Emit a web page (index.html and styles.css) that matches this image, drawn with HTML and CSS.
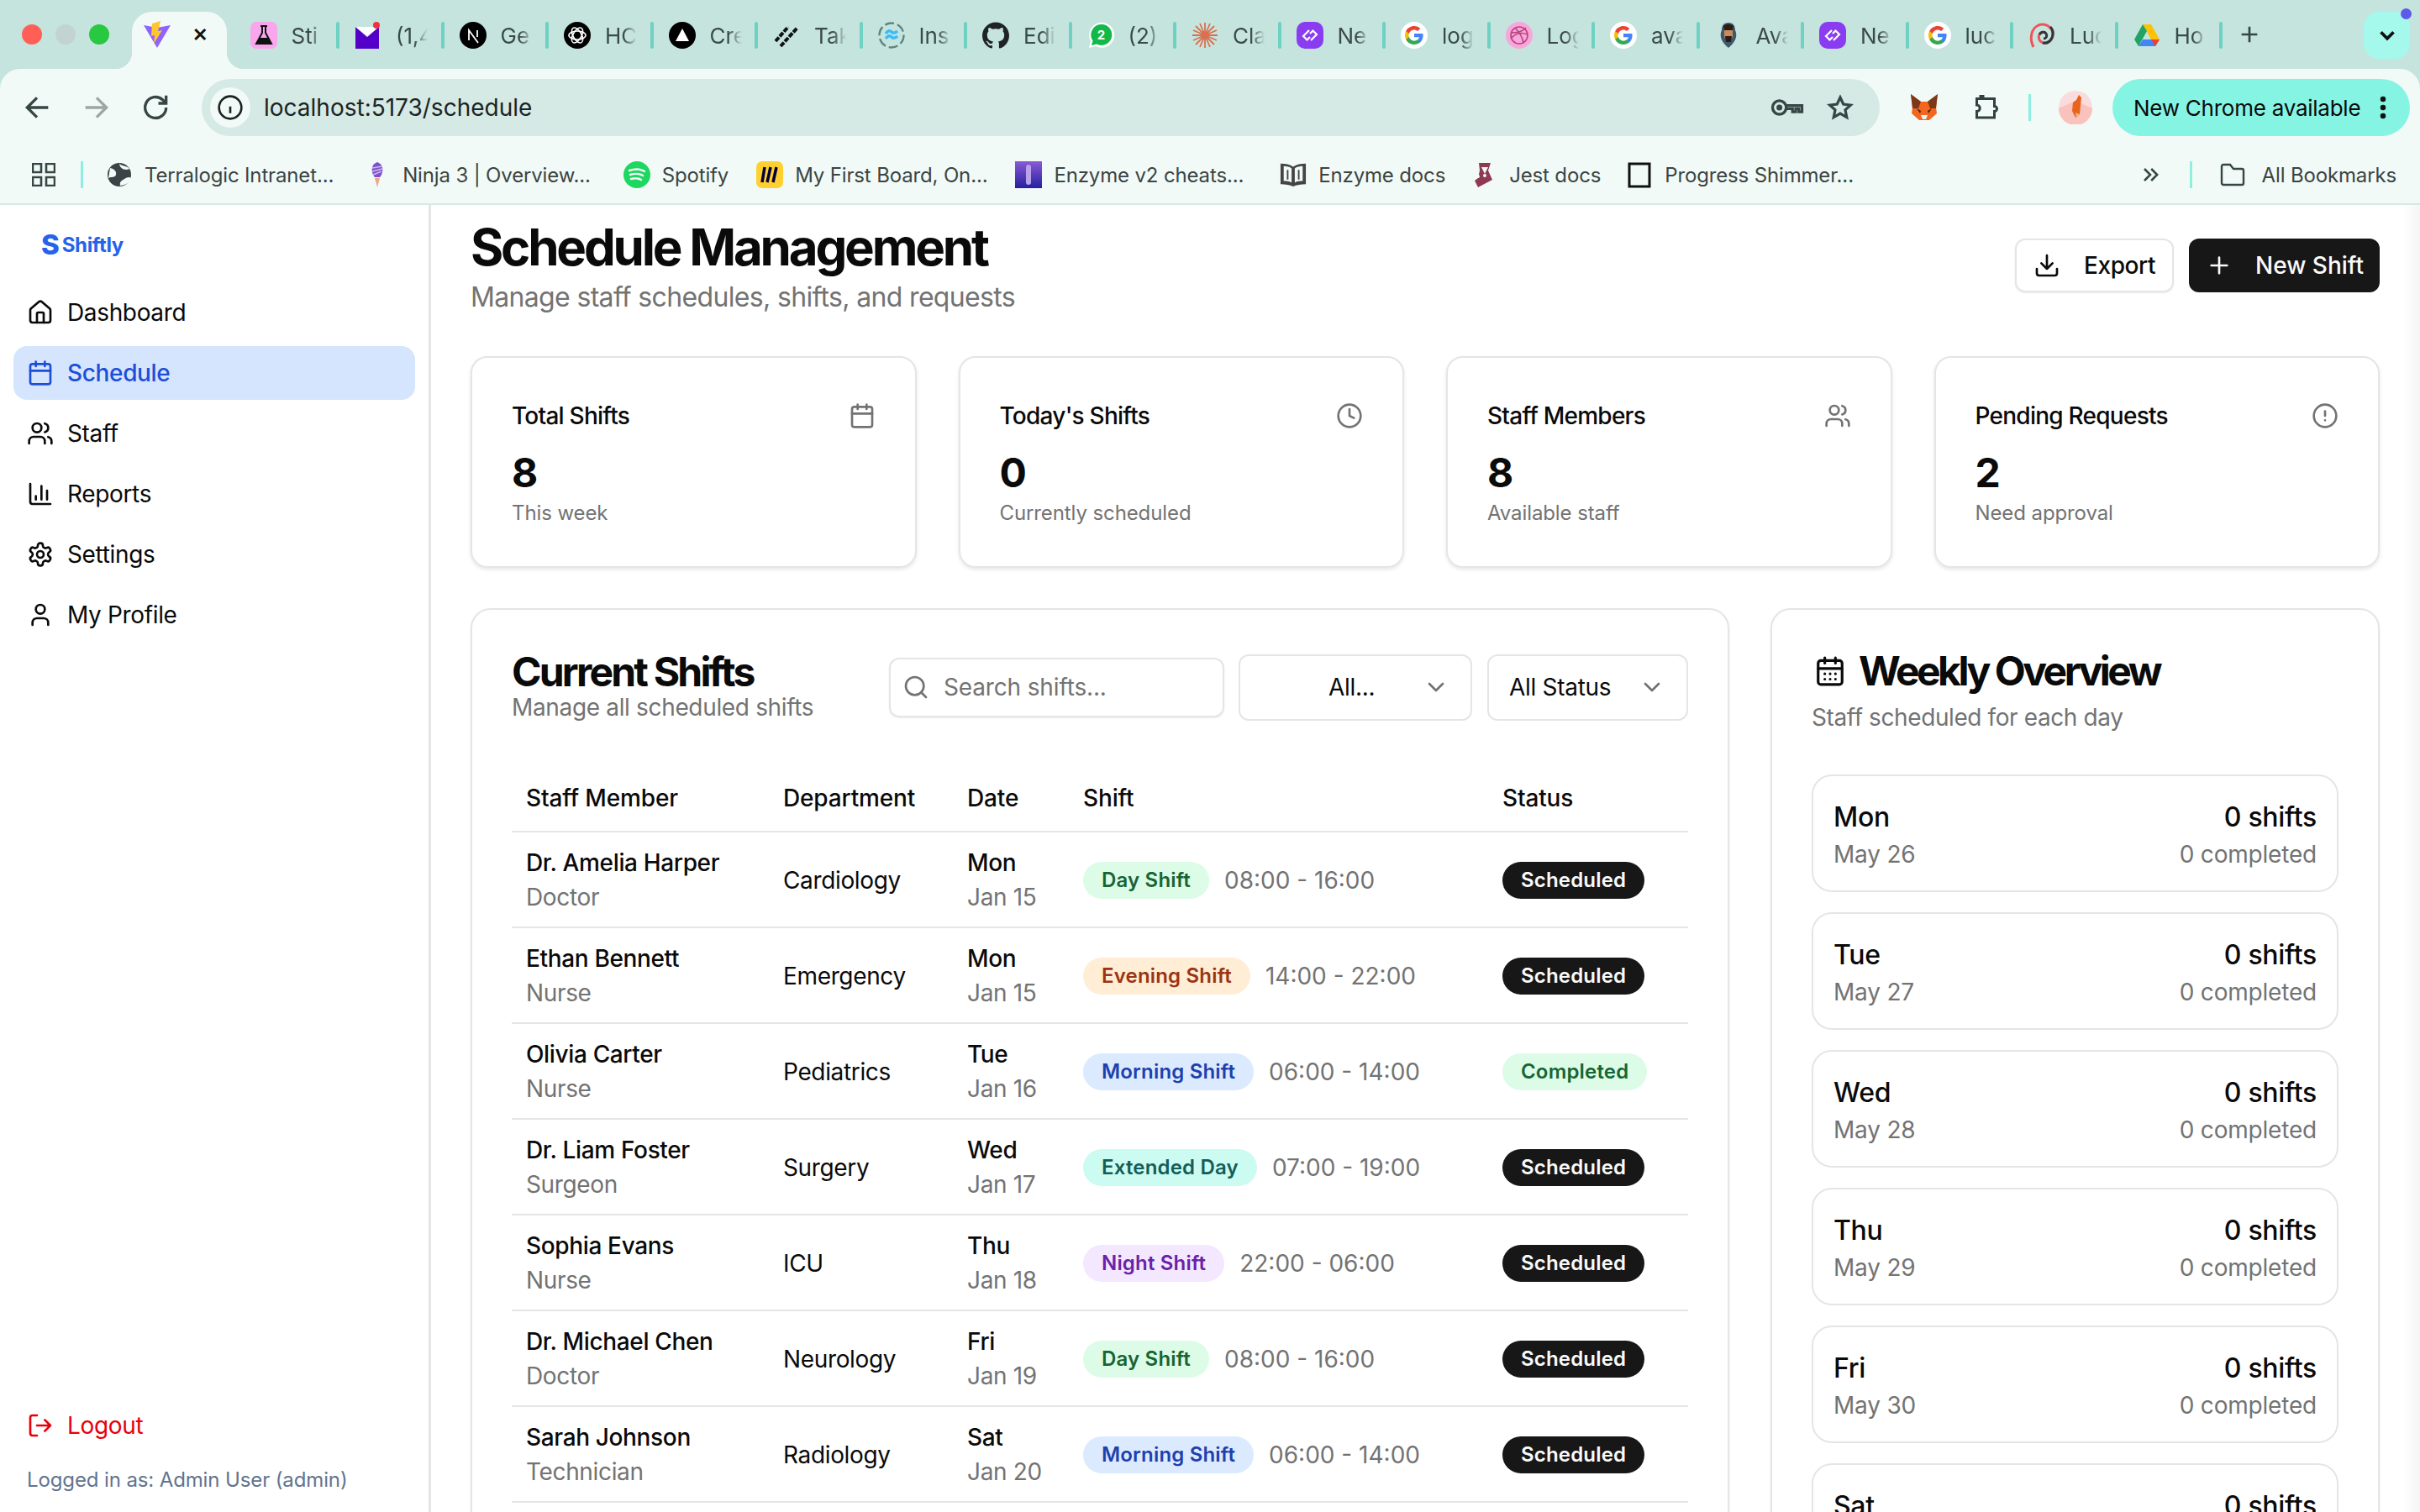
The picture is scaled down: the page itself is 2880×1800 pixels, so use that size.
FILE: index.html
```html
<!DOCTYPE html>
<html>
<head>
    <title>Shiftly - Schedule</title>
    <link rel="stylesheet" href="styles.css">
</head>
<body>
    <svg class="sprites" width="0" height="0">
        <symbol id="i-home" viewBox="0 0 24 24"><path d="M15 21v-8a1 1 0 0 0-1-1h-4a1 1 0 0 0-1 1v8"/><path d="M3 10a2 2 0 0 1 .709-1.528l7-5.999a2 2 0 0 1 2.582 0l7 5.999A2 2 0 0 1 21 10v9a2 2 0 0 1-2 2H5a2 2 0 0 1-2-2z"/></symbol>
        <symbol id="i-calendar" viewBox="0 0 24 24"><path d="M8 2v4M16 2v4"/><rect x="3" y="4" width="18" height="18" rx="2"/><path d="M3 10h18"/></symbol>
        <symbol id="i-calendar-days" viewBox="0 0 24 24"><path d="M8 2v4M16 2v4"/><rect x="3" y="4" width="18" height="18" rx="2"/><path d="M3 10h18M8 14h.01M12 14h.01M16 14h.01M8 18h.01M12 18h.01M16 18h.01"/></symbol>
        <symbol id="i-users" viewBox="0 0 24 24"><path d="M16 21v-2a4 4 0 0 0-4-4H6a4 4 0 0 0-4 4v2"/><circle cx="9" cy="7" r="4"/><path d="M22 21v-2a4 4 0 0 0-3-3.87M16 3.13a4 4 0 0 1 0 7.75"/></symbol>
        <symbol id="i-chart" viewBox="0 0 24 24"><path d="M3 3v16a2 2 0 0 0 2 2h16M8 17v-3M13 17V5M18 17V9"/></symbol>
        <symbol id="i-settings" viewBox="0 0 24 24"><path d="M12.22 2h-.44a2 2 0 0 0-2 2v.18a2 2 0 0 1-1 1.73l-.43.25a2 2 0 0 1-2 0l-.15-.08a2 2 0 0 0-2.73.73l-.22.38a2 2 0 0 0 .73 2.73l.15.1a2 2 0 0 1 1 1.72v.51a2 2 0 0 1-1 1.74l-.15.09a2 2 0 0 0-.73 2.73l.22.38a2 2 0 0 0 2.73.73l.15-.08a2 2 0 0 1 2 0l.43.25a2 2 0 0 1 1 1.73V20a2 2 0 0 0 2 2h.44a2 2 0 0 0 2-2v-.18a2 2 0 0 1 1-1.73l.43-.25a2 2 0 0 1 2 0l.15.08a2 2 0 0 0 2.73-.73l.22-.39a2 2 0 0 0-.73-2.73l-.15-.08a2 2 0 0 1-1-1.74v-.5a2 2 0 0 1 1-1.74l.15-.09a2 2 0 0 0 .73-2.73l-.22-.38a2 2 0 0 0-2.73-.73l-.15.08a2 2 0 0 1-2 0l-.43-.25a2 2 0 0 1-1-1.73V4a2 2 0 0 0-2-2z"/><circle cx="12" cy="12" r="3"/></symbol>
        <symbol id="i-user" viewBox="0 0 24 24"><path d="M19 21v-2a4 4 0 0 0-4-4H9a4 4 0 0 0-4 4v2"/><circle cx="12" cy="7" r="4"/></symbol>
        <symbol id="i-logout" viewBox="0 0 24 24"><path d="M9 21H5a2 2 0 0 1-2-2V5a2 2 0 0 1 2-2h4M16 17l5-5-5-5M21 12H9"/></symbol>
        <symbol id="i-clock" viewBox="0 0 24 24"><circle cx="12" cy="12" r="10"/><path d="M12 6v6l4 2"/></symbol>
        <symbol id="i-alert" viewBox="0 0 24 24"><circle cx="12" cy="12" r="10"/><path d="M12 8v4M12 16h.01"/></symbol>
        <symbol id="i-download" viewBox="0 0 24 24"><path d="M21 15v4a2 2 0 0 1-2 2H5a2 2 0 0 1-2-2v-4M7 10l5 5 5-5M12 15V3"/></symbol>
        <symbol id="i-plus" viewBox="0 0 24 24"><path d="M5 12h14M12 5v14"/></symbol>
        <symbol id="i-search" viewBox="0 0 24 24"><circle cx="11" cy="11" r="8"/><path d="m21 21-4.3-4.3"/></symbol>
        <symbol id="i-chevron" viewBox="0 0 24 24"><path d="m6 9 6 6 6-6"/></symbol>
        <symbol id="f-google" viewBox="0 0 32 32"><circle cx="16" cy="16" r="16" fill="#fff"/><g transform="translate(4 4)"><path fill="#4285f4" d="M22.56 12.25c0-.78-.07-1.53-.2-2.25H12v4.26h5.92c-.26 1.37-1.04 2.53-2.21 3.31v2.77h3.57c2.08-1.92 3.28-4.74 3.28-8.09z"/><path fill="#34a853" d="M12 23c2.97 0 5.46-.98 7.28-2.66l-3.57-2.77c-.98.66-2.23 1.06-3.71 1.06-2.86 0-5.29-1.93-6.16-4.53H2.18v2.84C3.99 20.53 7.7 23 12 23z"/><path fill="#fbbc05" d="M5.84 14.09c-.22-.66-.35-1.36-.35-2.09s.13-1.43.35-2.09V7.07H2.18C1.43 8.55 1 10.22 1 12s.43 3.45 1.18 4.93l2.85-2.22.81-.62z"/><path fill="#ea4335" d="M12 5.38c1.62 0 3.06.56 4.21 1.64l3.15-3.15C17.45 2.09 14.97 1 12 1 7.7 1 3.99 3.47 2.18 7.07l3.66 2.84c.87-2.6 3.3-4.53 6.16-4.53z"/></g></symbol>
        <symbol id="f-purple" viewBox="0 0 32 32"><rect width="32" height="32" rx="10" fill="#8a3df0"/><path d="M15 10 8 17l4.500 4.500 3.500-3.500M17 22l7-7-4.500-4.500L16 14" fill="none" stroke="#fff" stroke-width="2.200"/></symbol>
    </svg>

    <header class="chrome">
        <div class="tabstrip">
            <div class="lights">
                <span class="light light-red"></span>
                <span class="light light-grey"></span>
                <span class="light light-green"></span>
            </div>
            <div class="tab-active">
                <svg class="favicon" viewBox="0 0 32 32"><path d="M0 5l16 27L32 5 16 8z" fill="#8f63ff"/><path d="M20 0l-10 3-1 15 4-1-1 10 10-16-5 1z" fill="#ffc62e"/></svg>
                <span class="tab-close">✕</span>
            </div>
            <div class="tab">
                <svg class="favicon" viewBox="0 0 32 32"><rect width="32" height="32" rx="7" fill="#f9a6ec"/><path d="M12 5h8M14 5v8L7 26h18l-7-13V5" fill="none" stroke="#111" stroke-width="2"/><path d="M11 19h10l4 7H7z" fill="#111"/></svg>
                <span class="tab-title">Sti</span><span class="tab-sep"></span>
            </div>
            <div class="tab">
                <svg class="favicon" viewBox="0 0 32 32"><path d="M1 6h28v26H1z" fill="#5500c8"/><path d="M1 6h28L15 18z" fill="#fff"/><circle cx="26" cy="4" r="4" fill="#f0323c"/></svg>
                <span class="tab-title">(1,4</span><span class="tab-sep"></span>
            </div>
            <div class="tab">
                <svg class="favicon" viewBox="0 0 32 32"><circle cx="16" cy="16" r="16" fill="#000"/><path d="M11 22V10l11 15M21 10v8" fill="none" stroke="#fff" stroke-width="1.800"/></svg>
                <span class="tab-title">Ge</span><span class="tab-sep"></span>
            </div>
            <div class="tab">
                <svg class="favicon" viewBox="0 0 32 32"><circle cx="16" cy="16" r="16" fill="#000"/><g fill="none" stroke="#fff" stroke-width="1.600"><ellipse cx="16" cy="16" rx="10" ry="5"/><ellipse cx="16" cy="16" rx="10" ry="5" transform="rotate(60 16 16)"/><ellipse cx="16" cy="16" rx="10" ry="5" transform="rotate(120 16 16)"/></g></svg>
                <span class="tab-title">HC</span><span class="tab-sep"></span>
            </div>
            <div class="tab">
                <svg class="favicon" viewBox="0 0 32 32"><circle cx="16" cy="16" r="16" fill="#000"/><path d="M16 8l8 15H8z" fill="#fff"/></svg>
                <span class="tab-title">Cre</span><span class="tab-sep"></span>
            </div>
            <div class="tab">
                <svg class="favicon" viewBox="0 0 32 32"><path d="M3 23 18 6M9 29 29 7" stroke="#111" stroke-width="4" fill="none" stroke-dasharray="6 1.500"/></svg>
                <span class="tab-title">Tak</span><span class="tab-sep"></span>
            </div>
            <div class="tab">
                <svg class="favicon" viewBox="0 0 32 32"><circle cx="16" cy="16" r="14.500" fill="none" stroke="#5d8580" stroke-width="2.400" stroke-dasharray="11 4"/><path d="M9 14c3-4 5-4 7-2s4 2 7-1M9 20c3-4 5-4 7-2s4 2 7-1" fill="none" stroke="#38bdf8" stroke-width="3.400"/></svg>
                <span class="tab-title">Ins</span><span class="tab-sep"></span>
            </div>
            <div class="tab">
                <svg class="favicon" viewBox="0 0 24 24"><path fill="#1f2328" d="M12 .297c-6.63 0-12 5.373-12 12 0 5.303 3.438 9.8 8.205 11.385.6.113.82-.258.82-.577 0-.285-.01-1.04-.015-2.04-3.338.724-4.042-1.61-4.042-1.61C4.422 18.07 3.633 17.7 3.633 17.7c-1.087-.744.084-.729.084-.729 1.205.084 1.838 1.236 1.838 1.236 1.07 1.835 2.809 1.305 3.495.998.108-.776.417-1.305.76-1.605-2.665-.3-5.466-1.332-5.466-5.93 0-1.31.465-2.38 1.235-3.22-.135-.303-.54-1.523.105-3.176 0 0 1.005-.322 3.3 1.23.96-.267 1.98-.399 3-.405 1.02.006 2.04.138 3 .405 2.28-1.552 3.285-1.23 3.285-1.23.645 1.653.24 2.873.12 3.176.765.84 1.23 1.91 1.23 3.22 0 4.61-2.805 5.625-5.475 5.92.42.36.81 1.096.81 2.22 0 1.606-.015 2.896-.015 3.286 0 .315.21.69.825.57C20.565 22.092 24 17.592 24 12.297c0-6.627-5.373-12-12-12"/></svg>
                <span class="tab-title">Edi</span><span class="tab-sep"></span>
            </div>
            <div class="tab">
                <svg class="favicon" viewBox="0 0 32 32"><path d="M2 31l2-8A15 15 0 1 1 10 29z" fill="#fff"/><path d="M5 28l1.500-5.500A12.500 12.500 0 1 1 11 26.500z" fill="#12b94a"/><text x="16.500" y="21" text-anchor="middle" class="wa-count">2</text></svg>
                <span class="tab-title">(2)</span><span class="tab-sep"></span>
            </div>
            <div class="tab">
                <svg class="favicon" viewBox="0 0 32 32"><path d="M16 1v30M1 16h30M5 5l22 22M27 5 5 27M10 2l12 28M22 2 10 30M2 10l28 12M30 10 2 22" stroke="#d9704f" stroke-width="1.800" fill="none"/></svg>
                <span class="tab-title">Cla</span><span class="tab-sep"></span>
            </div>
            <div class="tab">
                <svg class="favicon"><use href="#f-purple"/></svg>
                <span class="tab-title">Ne</span><span class="tab-sep"></span>
            </div>
            <div class="tab">
                <svg class="favicon"><use href="#f-google"/></svg>
                <span class="tab-title">log</span><span class="tab-sep"></span>
            </div>
            <div class="tab">
                <svg class="favicon" viewBox="0 0 32 32"><circle cx="16" cy="16" r="15" fill="#f9a6dc" stroke="#f9a6dc" stroke-width="2"/><g fill="none" stroke="#b8467f" stroke-width="1.600"><circle cx="16" cy="16" r="10"/><path d="M7 13c7 0 13-1 17-6M11 7c5 5 9 12 10 18M6 20c5-6 12-8 20-5"/></g></svg>
                <span class="tab-title">Log</span><span class="tab-sep"></span>
            </div>
            <div class="tab">
                <svg class="favicon"><use href="#f-google"/></svg>
                <span class="tab-title">ava</span><span class="tab-sep"></span>
            </div>
            <div class="tab">
                <svg class="favicon" viewBox="0 0 32 32"><path d="M16 1c-6 0-8 4-8 9-3 6-1 14 8 21 9-7 11-15 8-21 0-5-2-9-8-9z" fill="#3c5a6b"/><path d="M11 10h10v8l-5 6-5-6z" fill="#c98a5c"/><path d="M10 5c3-3 9-3 12 0l-1 5H11zM12 17h8l-1 7h-6z" fill="#2b1c14"/></svg>
                <span class="tab-title">Ava</span><span class="tab-sep"></span>
            </div>
            <div class="tab">
                <svg class="favicon"><use href="#f-purple"/></svg>
                <span class="tab-title">Ne</span><span class="tab-sep"></span>
            </div>
            <div class="tab">
                <svg class="favicon"><use href="#f-google"/></svg>
                <span class="tab-title">luc</span><span class="tab-sep"></span>
            </div>
            <div class="tab">
                <svg class="favicon" viewBox="0 0 32 32"><path d="M6 30C1 20 3 8 12 4c8-3 17 2 17 11 0 7-6 11-11 10-5-1-7-6-5-10 2-3 6-4 8-1" fill="none" stroke="#f0525a" stroke-width="3"/><path d="M26 6c3 3 4 8 2 13-2 4-6 7-11 6" fill="none" stroke="#30363c" stroke-width="3"/><path d="M13 15c2-3 6-4 8-1 2 3 0 6-3 6" fill="none" stroke="#30363c" stroke-width="3"/></svg>
                <span class="tab-title">Luc</span><span class="tab-sep"></span>
            </div>
            <div class="tab">
                <svg class="favicon" viewBox="0 0 32 32"><path d="M11 3h10l10 18H21z" fill="#ffc107"/><path d="M11 3 1 21l5 8L16 11z" fill="#1fa463"/><path d="M6 29h20l5-8H11z" fill="#4285f4"/><path d="M26 29l5-8H21z" fill="#ea4335"/></svg>
                <span class="tab-title">Ho</span><span class="tab-sep"></span>
            </div>
            <div class="tab-new">
                <svg class="tool-icon"><use href="#i-plus"/></svg>
            </div>
            <div class="tab-search">
                <svg class="tab-search-icon"><use href="#i-chevron"/></svg>
                <span class="tab-search-dot"></span>
            </div>
        </div>

        <div class="toolbar">
            <div class="nav-btns">
                <svg class="tool-btn" viewBox="0 0 24 24"><path d="M20 12H5M12 5l-7 7 7 7"/></svg>
                <svg class="tool-btn tool-btn-off" viewBox="0 0 24 24"><path d="M4 12h15M12 5l7 7-7 7"/></svg>
                <svg class="tool-btn" viewBox="0 0 24 24"><path d="M19 12a7.500 7.500 0 1 1-2.500-5.600L19 9M19 3.500V9h-5.500"/></svg>
            </div>
            <div class="omnibox">
                <div class="site-info">
                    <svg class="site-info-icon" viewBox="0 0 24 24"><circle cx="12" cy="12" r="10"/><path d="M12 11v6M12 7h.01"/></svg>
                </div>
                <span class="url">localhost:5173/schedule</span>
                <svg class="omni-key" viewBox="0 0 32 24"><circle cx="8.500" cy="12" r="6.500"/><circle cx="8.500" cy="12" r="1.500"/><path d="M15 10h15v6h-3v-3h-3v3h-3v-3h-6"/></svg>
                <svg class="omni-star" viewBox="0 0 24 24"><path d="M12 3l2.800 6 6.500.8-4.800 4.400 1.300 6.500L12 17.400l-5.800 3.300 1.300-6.500-4.800-4.400 6.500-.8z"/></svg>
            </div>
            <svg class="ext-fox" viewBox="0 0 34 34"><path d="M1 1l12 9h8L33 1l-2 16 1 7-9 8H11l-9-8 1-7z" fill="#f4661e"/><path d="M1 1l12 9-3 8H3zM33 1 21 10l3 8h7z" fill="#7a3a1a"/><path d="M13 26h8l-2 5h-4z" fill="#eee"/><path d="M8 18l5 3-1 3zM26 18l-5 3 1 3z" fill="#33261c"/></svg>
            <svg class="ext-puzzle" viewBox="0 0 24 24"><path d="M15 5H9V3h-2v2H4v5a2.500 2.500 0 0 1 0 5v5h14v-5a2 2 0 0 0 0-4V5z" transform="translate(1 0)"/></svg>
            <span class="toolbar-sep"></span>
            <svg class="profile" viewBox="0 0 40 40"><circle cx="20" cy="20" r="20" fill="#fbdcdc"/><path d="M0 21l20-9 20 9a20 20 0 0 1-40 0z" fill="#f9c2bc"/><path d="M17 14l4-3 3-6 3 3-2 20-5 4-4-8z" fill="#e8641e"/><path d="M20 26l5 2-4 5z" fill="#f2b179"/></svg>
            <div class="update-pill">
                <span>New Chrome available</span>
                <svg class="pill-dots" viewBox="0 0 6 24"><circle cx="3" cy="4" r="2.600"/><circle cx="3" cy="12" r="2.600"/><circle cx="3" cy="20" r="2.600"/></svg>
            </div>
        </div>

        <div class="bookmarks">
            <svg class="apps" viewBox="0 0 28 28"><path d="M1 1h10v10H1zM17 1h10v10H17zM1 17h10v10H1zM17 17h10v10H17z"/></svg>
            <span class="bookmark-sep"></span>
            <div class="bookmark">
                <svg class="favicon" viewBox="0 0 32 32"><circle cx="16" cy="16" r="14" fill="#3c4245"/><path d="M5 8c5 1 8 4 7 8s-6 2-9 4zM17 29c-1-5 2-6 5-8s6-3 8-1c-1 5-5 8-13 9zM16 3c4 3 9 2 12 6-4 2-11 1-12-6z" fill="#f2faf7"/></svg>
                <span>Terralogic Intranet...</span>
            </div>
            <div class="bookmark bm-loose">
                <svg class="favicon" viewBox="0 0 32 32"><path d="M16 1c6 2 7 8 6 12-1 4-3 6-3 6h-6s-2-2-3-6c-1-4 0-10 6-12z" fill="#7b52c9"/><path d="M10 8l12-2M10 12l12-3M11 16l10-4" stroke="#cdb8f2" stroke-width="1.600"/><path d="M13 20h6l-3 11z" fill="#f2a58e"/></svg>
                <span>Ninja 3 | Overview...</span>
            </div>
            <div class="bookmark bm-snug">
                <svg class="favicon" viewBox="0 0 32 32"><circle cx="16" cy="16" r="16" fill="#1ed760"/><path d="M7 11c6-2 13-2 18 1M8 16c5-1.500 11-1.500 15 1M9 21c4-1 9-1 12 1" fill="none" stroke="#f2faf7" stroke-width="2.400" stroke-linecap="round"/></svg>
                <span>Spotify</span>
            </div>
            <div class="bookmark bm-snug">
                <svg class="favicon" viewBox="0 0 32 32"><rect width="32" height="32" rx="7" fill="#ffd02f"/><path d="M10 7 7 25M17 7l-4 18M24 7l-4 18" stroke="#050038" stroke-width="3.500" fill="none"/></svg>
                <span>My First Board, On...</span>
            </div>
            <div class="bookmark bm-wide">
                <svg class="favicon" viewBox="0 0 32 32"><defs><linearGradient id="enz" x1="0" y1="0" x2="0" y2="1"><stop offset="0" stop-color="#8a5ad6"/><stop offset="1" stop-color="#2620a0"/></linearGradient></defs><rect width="32" height="32" fill="url(#enz)"/><rect x="13" y="4" width="6" height="24" rx="3" fill="#b9a2e8"/></svg>
                <span>Enzyme v2 cheats...</span>
            </div>
            <div class="bookmark bm-tight">
                <svg class="favicon" viewBox="0 0 34 32"><path d="M1 2c6 0 12 1 16 4 4-3 10-4 16-4v26c-6 0-12 1-16 3-4-2-10-3-16-3z" fill="#444"/><path d="M5 5c4 0 8 1 10 3v18c-3-2-6-2-10-2zM29 5c-4 0-8 1-10 3v18c3-2 6-2 10-2z" fill="#f2faf7"/><path d="M10 10v12M24 10v12" stroke="#444" stroke-width="2"/></svg>
                <span>Enzyme docs</span>
            </div>
            <div class="bookmark bm-tight">
                <svg class="favicon" viewBox="0 0 32 32"><path d="M10 2h14l-3 9 5 11-17 9-4-8 4-3 2-9z" fill="#8e3a52"/><path d="M13 7h8l-4 8z" fill="#f2faf7"/><circle cx="9" cy="18" r="2" fill="#f2faf7"/><circle cx="17" cy="17" r="2" fill="#f2faf7"/></svg>
                <span>Jest docs</span>
            </div>
            <div class="bookmark">
                <svg class="favicon" viewBox="0 0 32 32"><rect x="4" y="3" width="24" height="27" fill="none" stroke="#111" stroke-width="3"/></svg>
                <span>Progress Shimmer...</span>
            </div>
            <svg class="more-bookmarks" viewBox="0 0 24 24"><path d="M6 6l6 6-6 6M13 6l6 6-6 6"/></svg>
            <span class="bookmark-sep bookmark-sep-right"></span>
            <div class="bookmark bookmark-all">
                <svg class="folder" viewBox="0 0 32 32"><path d="M3 6a2 2 0 0 1 2-2h8l4 5h10a2 2 0 0 1 2 2v15a2 2 0 0 1-2 2H5a2 2 0 0 1-2-2z"/></svg>
                <span>All Bookmarks</span>
            </div>
        </div>
    </header>

    <div class="app">
        <aside class="sidebar">
            <div class="logo"><span class="logo-s">S</span><span class="logo-name">Shiftly</span></div>
            <nav class="nav">
                <a class="nav-item"><svg class="icon"><use href="#i-home"/></svg>Dashboard</a>
                <a class="nav-item active"><svg class="icon"><use href="#i-calendar"/></svg>Schedule</a>
                <a class="nav-item"><svg class="icon"><use href="#i-users"/></svg>Staff</a>
                <a class="nav-item"><svg class="icon"><use href="#i-chart"/></svg>Reports</a>
                <a class="nav-item"><svg class="icon"><use href="#i-settings"/></svg>Settings</a>
                <a class="nav-item"><svg class="icon"><use href="#i-user"/></svg>My Profile</a>
            </nav>
            <div class="sidebar-foot">
                <a class="nav-item logout"><svg class="icon"><use href="#i-logout"/></svg>Logout</a>
                <p class="logged-in">Logged in as: Admin User (admin)</p>
            </div>
        </aside>

        <main class="main">
            <div class="page-head">
                <div>
                    <h1>Schedule Management</h1>
                    <p class="page-sub">Manage staff schedules, shifts, and requests</p>
                </div>
                <div class="page-actions">
                    <button class="btn btn-outline"><svg class="icon"><use href="#i-download"/></svg>Export</button>
                    <button class="btn btn-dark"><svg class="icon"><use href="#i-plus"/></svg>New Shift</button>
                </div>
            </div>

            <section class="stats">
                <div class="stat-card">
                    <div class="stat-top"><span>Total Shifts</span><svg class="icon stat-icon"><use href="#i-calendar"/></svg></div>
                    <div class="stat-num">8</div>
                    <div class="stat-note">This week</div>
                </div>
                <div class="stat-card">
                    <div class="stat-top"><span>Today's Shifts</span><svg class="icon stat-icon"><use href="#i-clock"/></svg></div>
                    <div class="stat-num">0</div>
                    <div class="stat-note">Currently scheduled</div>
                </div>
                <div class="stat-card">
                    <div class="stat-top"><span>Staff Members</span><svg class="icon stat-icon"><use href="#i-users"/></svg></div>
                    <div class="stat-num">8</div>
                    <div class="stat-note">Available staff</div>
                </div>
                <div class="stat-card">
                    <div class="stat-top"><span>Pending Requests</span><svg class="icon stat-icon"><use href="#i-alert"/></svg></div>
                    <div class="stat-num">2</div>
                    <div class="stat-note">Need approval</div>
                </div>
            </section>

            <div class="columns">
                <section class="panel">
                    <div class="shifts-head">
                        <div>
                            <h2>Current Shifts</h2>
                            <p class="shifts-sub">Manage all scheduled shifts</p>
                        </div>
                        <div class="filters">
                            <div class="search"><svg class="icon search-icon"><use href="#i-search"/></svg><span>Search shifts...</span></div>
                            <div class="select select-dept"><span>All...</span><svg class="icon chevron"><use href="#i-chevron"/></svg></div>
                            <div class="select select-status"><span>All Status</span><svg class="icon chevron"><use href="#i-chevron"/></svg></div>
                        </div>
                    </div>
                    <table class="shifts">
                        <colgroup><col class="col-staff"><col class="col-dept"><col class="col-date"><col class="col-shift"><col class="col-status"></colgroup>
                        <thead>
                            <tr><th>Staff Member</th><th>Department</th><th>Date</th><th>Shift</th><th>Status</th></tr>
                        </thead>
                        <tbody>
                            <tr>
                                <td><div class="cell-main">Dr. Amelia Harper</div><div class="cell-sub">Doctor</div></td>
                                <td>Cardiology</td>
                                <td><div class="cell-main">Mon</div><div class="cell-sub">Jan 15</div></td>
                                <td><div class="shift-cell"><span class="badge day">Day Shift</span><span class="time">08:00 - 16:00</span></div></td>
                                <td><span class="badge scheduled">Scheduled</span></td>
                            </tr>
                            <tr>
                                <td><div class="cell-main">Ethan Bennett</div><div class="cell-sub">Nurse</div></td>
                                <td>Emergency</td>
                                <td><div class="cell-main">Mon</div><div class="cell-sub">Jan 15</div></td>
                                <td><div class="shift-cell"><span class="badge evening">Evening Shift</span><span class="time">14:00 - 22:00</span></div></td>
                                <td><span class="badge scheduled">Scheduled</span></td>
                            </tr>
                            <tr>
                                <td><div class="cell-main">Olivia Carter</div><div class="cell-sub">Nurse</div></td>
                                <td>Pediatrics</td>
                                <td><div class="cell-main">Tue</div><div class="cell-sub">Jan 16</div></td>
                                <td><div class="shift-cell"><span class="badge morning">Morning Shift</span><span class="time">06:00 - 14:00</span></div></td>
                                <td><span class="badge day">Completed</span></td>
                            </tr>
                            <tr>
                                <td><div class="cell-main">Dr. Liam Foster</div><div class="cell-sub">Surgeon</div></td>
                                <td>Surgery</td>
                                <td><div class="cell-main">Wed</div><div class="cell-sub">Jan 17</div></td>
                                <td><div class="shift-cell"><span class="badge extended">Extended Day</span><span class="time">07:00 - 19:00</span></div></td>
                                <td><span class="badge scheduled">Scheduled</span></td>
                            </tr>
                            <tr>
                                <td><div class="cell-main">Sophia Evans</div><div class="cell-sub">Nurse</div></td>
                                <td>ICU</td>
                                <td><div class="cell-main">Thu</div><div class="cell-sub">Jan 18</div></td>
                                <td><div class="shift-cell"><span class="badge night">Night Shift</span><span class="time">22:00 - 06:00</span></div></td>
                                <td><span class="badge scheduled">Scheduled</span></td>
                            </tr>
                            <tr>
                                <td><div class="cell-main">Dr. Michael Chen</div><div class="cell-sub">Doctor</div></td>
                                <td>Neurology</td>
                                <td><div class="cell-main">Fri</div><div class="cell-sub">Jan 19</div></td>
                                <td><div class="shift-cell"><span class="badge day">Day Shift</span><span class="time">08:00 - 16:00</span></div></td>
                                <td><span class="badge scheduled">Scheduled</span></td>
                            </tr>
                            <tr>
                                <td><div class="cell-main">Sarah Johnson</div><div class="cell-sub">Technician</div></td>
                                <td>Radiology</td>
                                <td><div class="cell-main">Sat</div><div class="cell-sub">Jan 20</div></td>
                                <td><div class="shift-cell"><span class="badge morning">Morning Shift</span><span class="time">06:00 - 14:00</span></div></td>
                                <td><span class="badge scheduled">Scheduled</span></td>
                            </tr>
                        </tbody>
                    </table>
                </section>

                <section class="panel">
                    <h2 class="week-title"><svg class="icon"><use href="#i-calendar-days"/></svg>Weekly Overview</h2>
                    <p class="week-sub">Staff scheduled for each day</p>
                    <div class="days">
                        <div class="day-card"><div><div class="day-name">Mon</div><div class="day-date">May 26</div></div><div class="day-right"><div class="day-name">0 shifts</div><div class="day-date">0 completed</div></div></div>
                        <div class="day-card"><div><div class="day-name">Tue</div><div class="day-date">May 27</div></div><div class="day-right"><div class="day-name">0 shifts</div><div class="day-date">0 completed</div></div></div>
                        <div class="day-card"><div><div class="day-name">Wed</div><div class="day-date">May 28</div></div><div class="day-right"><div class="day-name">0 shifts</div><div class="day-date">0 completed</div></div></div>
                        <div class="day-card"><div><div class="day-name">Thu</div><div class="day-date">May 29</div></div><div class="day-right"><div class="day-name">0 shifts</div><div class="day-date">0 completed</div></div></div>
                        <div class="day-card"><div><div class="day-name">Fri</div><div class="day-date">May 30</div></div><div class="day-right"><div class="day-name">0 shifts</div><div class="day-date">0 completed</div></div></div>
                        <div class="day-card"><div><div class="day-name">Sat</div><div class="day-date">May 31</div></div><div class="day-right"><div class="day-name">0 shifts</div><div class="day-date">0 completed</div></div></div>
                    </div>
                </section>
            </div>
        </main>
    </div>
</body>
</html>
```

FILE: styles.css
```css
* {
    box-sizing: border-box;
}

html, body {
    margin: 0;
    height: 100%;
    overflow: hidden;
}

body {
    display: flex;
    flex-direction: column;
    background: #fff;
    color: #0a0a0a;
    font-family: Inter, "Noto Sans", sans-serif;
    font-size: 28px;
}

.sprites {
    position: absolute;
}

h1, h2, p {
    margin: 0;
}

/* browser chrome */
.chrome {
    flex: none;
    height: 244px;
    background: #c5e4de;
}

.tabstrip {
    display: flex;
    height: 82px;
}

.lights {
    display: flex;
    gap: 16px;
    width: 157px;
    padding: 29px 0 0 26px;
}

.light {
    width: 24px;
    height: 24px;
    border-radius: 50%;
}

.light-red { background: #ff5f57; }
.light-grey { background: #c3d3cf; }
.light-green { background: #28c840; }

.tab-active {
    position: relative;
    display: flex;
    align-items: center;
    gap: 26px;
    width: 113px;
    height: 68px;
    margin: 14px 9.5px 0 0;
    padding: 0 0 14px 14px;
    background: #f2faf7;
    border-radius: 24px 24px 0 0;
}

.tab-active::before,
.tab-active::after {
    content: "";
    position: absolute;
    bottom: 0;
    width: 20px;
    height: 20px;
}

.tab-active::before {
    left: -20px;
    background: radial-gradient(circle at 0 0, transparent 20px, #f2faf7 20.5px);
}

.tab-active::after {
    right: -20px;
    background: radial-gradient(circle at 100% 0, transparent 20px, #f2faf7 20.5px);
}

.tab-close {
    font-size: 22px;
    font-weight: 600;
    color: #111;
}

.favicon {
    flex: none;
    width: 32px;
    height: 32px;
}

.tab {
    display: flex;
    align-items: center;
    flex: none;
    width: 124.5px;
    height: 32px;
    margin-top: 26px;
    padding-left: 18px;
}

.tab-title {
    width: 50px;
    margin-left: 17px;
    white-space: nowrap;
    font-size: 26px;
    color: #3b4a48;
    -webkit-mask-image: linear-gradient(to right, #000 22px, transparent 38px);
    mask-image: linear-gradient(to right, #000 22px, transparent 38px);
}

.tab-sep {
    flex: none;
    width: 4px;
    height: 32px;
    margin-left: auto;
    border-radius: 2px;
    background: #6ed1c2;
}

.wa-count {
    font-size: 15px;
    font-weight: 700;
    fill: #fff;
}

.tab-new {
    width: 32px;
    height: 32px;
    margin: 25px 0 0 16px;
}

.tool-icon {
    width: 32px;
    height: 32px;
    fill: none;
    stroke: #364644;
    stroke-width: 2;
}

.tab-search {
    position: relative;
    width: 55px;
    height: 56px;
    margin: 14px 12px 0 auto;
    border-radius: 18px;
    background: #a5f8ec;
    text-align: center;
}

.tab-search-icon {
    width: 30px;
    height: 30px;
    margin-top: 13px;
    fill: none;
    stroke: #111;
    stroke-width: 3;
}

.tab-search-dot {
    position: absolute;
    top: -4px;
    right: -2px;
    width: 13px;
    height: 13px;
    border-radius: 50%;
    background: #5b5be8;
}

.toolbar {
    display: flex;
    align-items: center;
    height: 80px;
    padding: 12px 12px 0 24px;
    background: #f2faf7;
    border-radius: 24px 24px 0 0;
}

.nav-btns {
    display: flex;
    gap: 31px;
    margin-right: 34px;
}

.tool-btn {
    width: 40px;
    height: 40px;
    fill: none;
    stroke: #364644;
    stroke-width: 2;
}

.tool-btn-off {
    stroke: #9aa8a5;
}

.omnibox {
    display: flex;
    align-items: center;
    flex: 1;
    height: 68px;
    padding: 0 31px 0 10px;
    border-radius: 34px;
    background: #d5e9e5;
}

.site-info {
    display: flex;
    align-items: center;
    justify-content: center;
    width: 48px;
    height: 48px;
    border-radius: 50%;
    background: #f2faf7;
}

.site-info-icon {
    width: 32px;
    height: 32px;
    fill: none;
    stroke: #1c2423;
    stroke-width: 2;
}

.url {
    margin-left: 16px;
    font-size: 28px;
    color: #1c2423;
}

.omni-key {
    width: 40px;
    height: 30px;
    margin-left: auto;
    fill: none;
    stroke: #364644;
    stroke-width: 2.6;
}

.omni-star {
    width: 32px;
    height: 32px;
    margin-left: 27px;
    fill: none;
    stroke: #364644;
    stroke-width: 2.4;
}

.ext-fox {
    width: 34px;
    height: 34px;
    margin-left: 36px;
}

.ext-puzzle {
    width: 36px;
    height: 36px;
    margin-left: 38px;
    fill: none;
    stroke: #2f4240;
    stroke-width: 2;
}

.toolbar-sep {
    width: 3px;
    height: 32px;
    margin-left: 33px;
    background: #8eeee0;
}

.profile {
    width: 40px;
    height: 40px;
    margin-left: 33px;
}

.update-pill {
    display: flex;
    align-items: center;
    justify-content: space-between;
    width: 354px;
    height: 68px;
    margin-left: 24px;
    padding: 0 28px 0 25px;
    border-radius: 34px;
    background: #86f4e3;
    font-size: 26px;
    letter-spacing: -0.25px;
    white-space: nowrap;
}

.pill-dots {
    width: 8px;
    height: 30px;
    fill: #111;
}

.bookmarks {
    display: flex;
    align-items: center;
    height: 82px;
    padding: 12px 28px 0 38px;
    background: #f2faf7;
    border-bottom: 2px solid #d8e8e4;
    font-size: 24px;
    letter-spacing: -0.15px;
    color: #3b4442;
}

.apps {
    width: 28px;
    height: 28px;
    fill: none;
    stroke: #364644;
    stroke-width: 2.6;
}

.bookmark-sep {
    width: 3px;
    height: 32px;
    margin: 0 27px 0 30px;
    background: #8eeee0;
}

.bookmark-sep-right {
    margin: 0 32px 0 33px;
}

.bookmark {
    display: flex;
    align-items: center;
    gap: 14px;
    margin-right: 36px;
    white-space: nowrap;
}

.bm-loose { margin-right: 39px; }
.bm-snug { margin-right: 33px; }
.bm-tight { margin-right: 30px; }
.bm-wide { margin-right: 43px; }

.bookmark-all {
    gap: 19px;
    margin-right: 0;
}

.more-bookmarks {
    width: 28px;
    height: 28px;
    margin-left: auto;
    fill: none;
    stroke: #364644;
    stroke-width: 2.2;
}

.folder {
    width: 32px;
    height: 32px;
    fill: none;
    stroke: #364644;
    stroke-width: 2.4;
}

/* app */
.app {
    flex: 1;
    display: flex;
    min-height: 0;
}

.icon {
    flex: none;
    width: 32px;
    height: 32px;
    fill: none;
    stroke: currentColor;
    stroke-width: 2;
    stroke-linecap: round;
    stroke-linejoin: round;
}

.sidebar {
    flex: none;
    display: flex;
    flex-direction: column;
    width: 513px;
    padding: 0 16px 22px;
    border-right: 3px solid #e5e5e5;
}

.logo {
    display: flex;
    align-items: center;
    gap: 3px;
    height: 94px;
    margin-bottom: 2px;
    padding-left: 33px;
    color: #2563eb;
    font-weight: 700;
}

.logo-s {
    font-size: 33px;
    font-weight: 800;
}

.logo-name {
    font-size: 24px;
    letter-spacing: -0.4px;
}

.nav {
    display: flex;
    flex-direction: column;
    gap: 8px;
}

.nav-item {
    display: flex;
    align-items: center;
    gap: 16px;
    height: 64px;
    padding-left: 16px;
    border-radius: 16px;
    font-size: 28px;
    font-weight: 400;
    letter-spacing: -0.35px;
}

.nav-item.active {
    background: #d5e5fd;
    color: #1d4ed8;
    font-weight: 500;
}

.sidebar-foot {
    margin-top: auto;
}

.logout {
    color: #e7000b;
}

.logged-in {
    margin: 17px 0 0 16px;
    font-size: 24px;
    line-height: 32px;
    letter-spacing: -0.12px;
    color: #62748e;
}

.main {
    position: relative;
    flex: 1;
    min-width: 0;
    padding: 14px 48px 0 47px;
    overflow: hidden;
}

/* faint scrollbar track */
.main::after {
    content: "";
    position: absolute;
    top: 0;
    right: 0;
    bottom: 0;
    width: 20px;
    background: linear-gradient(to right, #fff, #f5f5f5);
}

.page-head {
    display: flex;
    justify-content: space-between;
}

h1 {
    font-size: 60px;
    line-height: 72px;
    font-weight: 700;
    letter-spacing: -3.2px;
}

.page-sub {
    font-size: 32px;
    line-height: 48px;
    letter-spacing: -0.66px;
    color: #737373;
}

.page-actions {
    display: flex;
    gap: 18px;
    margin-top: 26px;
}

.btn {
    display: flex;
    align-items: center;
    height: 64px;
    border-radius: 12px;
    font-family: inherit;
    font-size: 28px;
    font-weight: 500;
}

.btn-outline {
    width: 189px;
    gap: 28px;
    padding: 0 0 0 20px;
    border: 2px solid #e5e5e5;
    background: #fff;
    color: #0a0a0a;
    letter-spacing: -0.4px;
    box-shadow: 0 1px 2px rgba(0, 0, 0, .08);
}

.btn-dark {
    width: 227px;
    gap: 27px;
    padding: 0 0 0 20px;
    border: 0;
    background: #171717;
    color: #fafafa;
}

.stats {
    display: grid;
    grid-template-columns: repeat(4, 1fr);
    gap: 50px;
    margin-top: 46px;
}

.stat-card {
    height: 252px;
    padding: 48px 47px;
    border: 2px solid #e5e5e5;
    border-radius: 20px;
    box-shadow: 0 2px 4px rgba(0, 0, 0, .1);
}

.stat-top {
    display: flex;
    align-items: center;
    justify-content: space-between;
    height: 42px;
    font-weight: 500;
    letter-spacing: -0.75px;
}

.stat-icon {
    color: #737373;
}

.stat-num {
    margin-top: 15px;
    font-size: 48px;
    line-height: 64px;
    font-weight: 700;
}

.stat-note {
    font-size: 24px;
    line-height: 32px;
    letter-spacing: -0.1px;
    color: #737373;
}

.columns {
    display: grid;
    grid-template-columns: 1498px 1fr;
    gap: 49px;
    margin-top: 48px;
    align-items: start;
}

.panel {
    padding: 46px 47px 47px;
    border: 2px solid #e5e5e5;
    border-radius: 24px;
    box-shadow: 0 1px 3px rgba(0, 0, 0, .08);
}

h2 {
    font-size: 48px;
    line-height: 54px;
    font-weight: 700;
    letter-spacing: -2.8px;
}

.shifts-head {
    display: flex;
    justify-content: space-between;
    align-items: center;
    height: 88px;
    margin-bottom: 50px;
}

.shifts-sub {
    margin-top: -2px;
    font-size: 28px;
    line-height: 34px;
    letter-spacing: -0.34px;
    color: #737373;
}

.filters {
    display: flex;
    align-items: center;
    gap: 17px;
    margin-top: 4px;
}

.search {
    display: flex;
    align-items: center;
    gap: 17px;
    width: 399px;
    height: 71px;
    padding-left: 14px;
    border: 2px solid #e5e5e5;
    border-radius: 12px;
    box-shadow: 0 1px 2px rgba(0, 0, 0, .08);
    color: #737373;
    letter-spacing: -0.15px;
}

.select {
    display: flex;
    align-items: center;
    justify-content: space-between;
    height: 79px;
    padding: 0 25px;
    border: 2px solid #e5e5e5;
    border-radius: 12px;
    letter-spacing: -0.3px;
}

.select-dept {
    width: 278px;
    padding-left: 105px;
}

.select-status {
    width: 239px;
    margin-left: 1px;
    padding-left: 24px;
}

.chevron {
    color: #737373;
}

.shifts {
    width: 100%;
    table-layout: fixed;
    border-collapse: collapse;
}

.col-staff { width: 307px; }
.col-dept { width: 219px; }
.col-date { width: 138px; }
.col-shift { width: 499px; }

.shifts th {
    height: 80px;
    padding: 0 16px;
    border-bottom: 2px solid #e5e5e5;
    text-align: left;
    font-weight: 500;
    letter-spacing: -0.15px;
}

.shifts td {
    height: 114px;
    padding: 2px 16px 0;
    border-bottom: 2px solid #e5e5e5;
    letter-spacing: -0.35px;
}

.shifts th:first-child,
.shifts td:first-child {
    padding-left: 17px;
}

.cell-main {
    font-weight: 500;
    line-height: 41px;
}

.cell-sub {
    line-height: 41px;
    color: #737373;
}

.shift-cell {
    display: flex;
    align-items: center;
    gap: 18px;
}

.badge {
    display: inline-block;
    height: 44px;
    padding: 0 22px;
    border-radius: 22px;
    font-size: 24px;
    line-height: 44px;
    font-weight: 600;
    letter-spacing: 0.18px;
    white-space: nowrap;
}

.day { background: #dcfce7; color: #166534; }
.evening { background: #ffedd5; color: #9a3412; }
.morning { background: #dbeafe; color: #1e40af; }
.extended { background: #ccfbf1; color: #115e59; }
.night { background: #f3e8ff; color: #6b21a8; }
.scheduled { background: #171717; color: #fafafa; }

.time {
    color: #737373;
    letter-spacing: 0;
}

.week-title {
    display: flex;
    align-items: center;
    gap: 15px;
    height: 54px;
    padding-left: 3px;
    letter-spacing: -3.5px;
}

.week-title .icon {
    width: 38px;
    height: 38px;
}

.week-sub {
    margin-top: 8px;
    line-height: 40px;
    letter-spacing: -0.4px;
    color: #737373;
}

.days {
    display: flex;
    flex-direction: column;
    gap: 24px;
    margin-top: 48px;
}

.day-card {
    display: flex;
    justify-content: space-between;
    height: 140px;
    padding: 27px 24px 0;
    border: 2px solid #e5e5e5;
    border-radius: 24px;
}

.day-right {
    text-align: right;
}

.day-name {
    font-size: 32px;
    line-height: 44px;
    font-weight: 500;
    letter-spacing: -0.3px;
}

.day-date {
    font-size: 28px;
    line-height: 44px;
    letter-spacing: -0.2px;
    color: #737373;
}
```
